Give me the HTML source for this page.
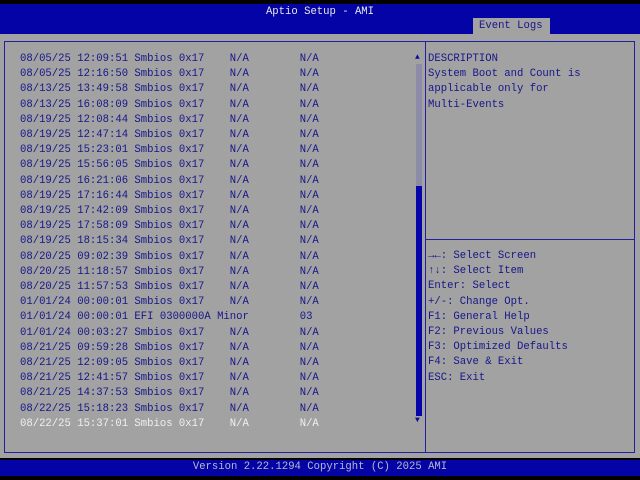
<!DOCTYPE html>
<html><head><style>
body{margin:0;width:640px;height:480px;background:#000;position:relative;overflow:hidden;font-family:"Liberation Mono","DejaVu Sans Mono",monospace;font-size:10.6px;}
div{position:absolute;}
.t{white-space:pre;color:#16168a;line-height:15px;}
</style></head><body>
<div style="left:0;top:4px;width:640px;height:30px;background:#0404a6"></div>
<div class="t" style="left:0;top:5px;width:640px;text-align:center;color:#e8e8e8">Aptio Setup - AMI</div>
<div style="left:473px;top:18px;width:77px;height:16px;background:#a2a2a2"></div>
<div class="t" style="left:479px;top:19px;color:#16168a">Event Logs</div>
<div style="left:0;top:34px;width:640px;height:424px;background:#a2a2a2"></div>
<div style="left:4px;top:41px;width:629px;height:410px;border:1px solid #2020a0"></div>
<div style="left:425px;top:42px;width:1px;height:410px;background:#2020a0"></div>
<div style="left:426px;top:239px;width:208px;height:1px;background:#2020a0"></div>
<div style="left:415px;top:53px;color:#0a0aa0;font-size:8px">▲</div>
<div style="left:416px;top:64px;width:6px;height:122px;background:#8c8ca8"></div>
<div style="left:416px;top:186px;width:6px;height:230px;background:#0606a8"></div>
<div style="left:415px;top:416px;color:#0a0aa0;font-size:8px">▼</div>
<div class="t" style="left:20px;top:52px;line-height:15.2px">08/05/25 12:09:51 Smbios 0x17    N/A        N/A
08/05/25 12:16:50 Smbios 0x17    N/A        N/A
08/13/25 13:49:58 Smbios 0x17    N/A        N/A
08/13/25 16:08:09 Smbios 0x17    N/A        N/A
08/19/25 12:08:44 Smbios 0x17    N/A        N/A
08/19/25 12:47:14 Smbios 0x17    N/A        N/A
08/19/25 15:23:01 Smbios 0x17    N/A        N/A
08/19/25 15:56:05 Smbios 0x17    N/A        N/A
08/19/25 16:21:06 Smbios 0x17    N/A        N/A
08/19/25 17:16:44 Smbios 0x17    N/A        N/A
08/19/25 17:42:09 Smbios 0x17    N/A        N/A
08/19/25 17:58:09 Smbios 0x17    N/A        N/A
08/19/25 18:15:34 Smbios 0x17    N/A        N/A
08/20/25 09:02:39 Smbios 0x17    N/A        N/A
08/20/25 11:18:57 Smbios 0x17    N/A        N/A
08/20/25 11:57:53 Smbios 0x17    N/A        N/A
01/01/24 00:00:01 Smbios 0x17    N/A        N/A
01/01/24 00:00:01 EFI 0300000A Minor        03
01/01/24 00:03:27 Smbios 0x17    N/A        N/A
08/21/25 09:59:28 Smbios 0x17    N/A        N/A
08/21/25 12:09:05 Smbios 0x17    N/A        N/A
08/21/25 12:41:57 Smbios 0x17    N/A        N/A
08/21/25 14:37:53 Smbios 0x17    N/A        N/A
08/22/25 15:18:23 Smbios 0x17    N/A        N/A
<span style="color:#f0f0f0">08/22/25 15:37:01 Smbios 0x17    N/A        N/A</span></div>
<div class="t" style="left:428px;top:52px;line-height:15.2px">DESCRIPTION
System Boot and Count is
applicable only for
Multi-Events</div>
<div class="t" style="left:428px;top:249px;line-height:15.2px">→←: Select Screen
↑↓: Select Item
Enter: Select
+/-: Change Opt.
F1: General Help
F2: Previous Values
F3: Optimized Defaults
F4: Save &amp; Exit
ESC: Exit</div>
<div style="left:0;top:460px;width:640px;height:16px;background:#0404a6"></div>
<div class="t" style="left:0;top:460px;width:640px;text-align:center;color:#b8b8c8">Version 2.22.1294 Copyright (C) 2025 AMI</div>
</body></html>
